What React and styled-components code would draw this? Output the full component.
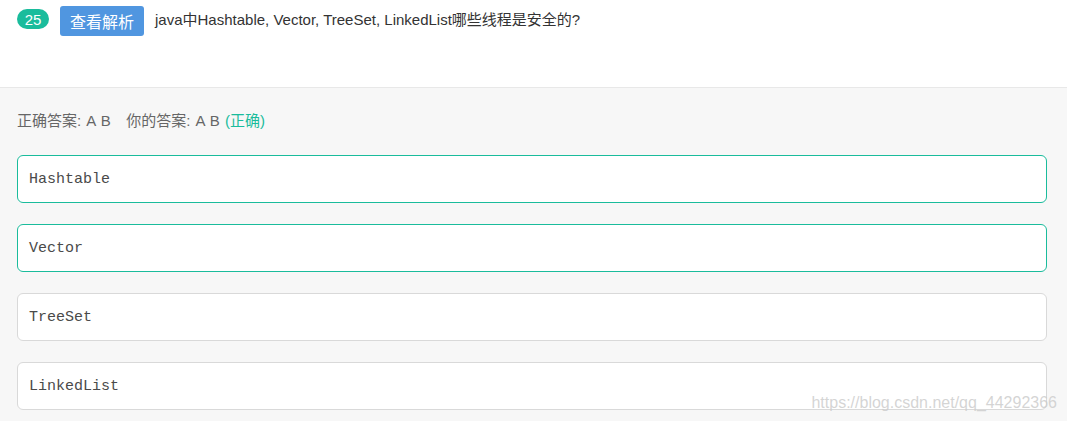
import React from 'react';
import styled, { createGlobalStyle, css } from 'styled-components';

const GlobalStyle = createGlobalStyle`
  body {
    margin: 0;
    font-family: "Liberation Sans", Arial, "Noto Sans CJK SC", sans-serif;
    background: #f7f7f7;
  }
`;

const Page = styled.div`
  position: relative;
  width: 1067px;
  height: 421px;
  overflow: hidden;
  background: #f7f7f7;
`;

const Header = styled.div`
  display: flex;
  align-items: flex-start;
  height: 81px;
  padding: 6px 17px 0;
  background: #fff;
  border-bottom: 1px solid #e8e8e8;
`;

const Badge = styled.span`
  display: inline-flex;
  align-items: center;
  justify-content: center;
  width: 32px;
  height: 20px;
  margin-top: 3px;
  border-radius: 10px;
  background: #1abc9c;
  color: #fff;
  font-size: 15px;
`;

const ParseButton = styled.button`
  width: 84px;
  height: 30px;
  margin-left: 11px;
  border: none;
  border-radius: 3px;
  background: #5096e0;
  color: #fff;
  font-size: 16px;
  font-family: "Liberation Sans", Arial, "Noto Sans CJK SC", sans-serif;
  padding: 0;
`;

const Question = styled.div`
  margin-left: 11px;
  margin-top: 4px;
  font-size: 15px;
  line-height: 20px;
  color: #333;
`;

const Body = styled.div`
  padding: 23px 20px 0 17px;
`;

const Result = styled.div`
  font-size: 15px;
  line-height: 20px;
  color: #666;
  white-space: pre;
  word-spacing: 1px;
`;

const Right = styled.span`
  color: #1abc9c;
`;

const Options = styled.div`
  display: flex;
  flex-direction: column;
  gap: 21px;
  margin-top: 24px;
`;

const Option = styled.div`
  display: flex;
  align-items: center;
  height: 46px;
  padding-left: 11px;
  background: #fff;
  border: 1px solid #d9d9d9;
  border-radius: 6px;
  font-family: "Liberation Mono", "Courier New", monospace;
  font-size: 15px;
  color: #4a4a4a;
  ${p =>
    p.correct &&
    css`
      border-color: #1abc9c;
    `}
`;

const Watermark = styled.div`
  position: absolute;
  right: 10px;
  bottom: 9px;
  font-size: 16px;
  color: rgba(205, 205, 205, 0.85);
`;

const options = [
  { label: 'Hashtable', correct: true },
  { label: 'Vector', correct: true },
  { label: 'TreeSet', correct: false },
  { label: 'LinkedList', correct: false },
];

export default function App() {
  return (
    <Page>
      <GlobalStyle />
      <Header>
        <Badge>25</Badge>
        <ParseButton>查看解析</ParseButton>
        <Question>java中Hashtable, Vector, TreeSet, LinkedList哪些线程是安全的?</Question>
      </Header>
      <Body>
        <Result>
          正确答案: A B   你的答案: A B <Right>(正确)</Right>
        </Result>
        <Options>
          {options.map(o => (
            <Option key={o.label} correct={o.correct}>
              {o.label}
            </Option>
          ))}
        </Options>
      </Body>
      <Watermark>https://blog.csdn.net/qq_44292366</Watermark>
    </Page>
  );
}
